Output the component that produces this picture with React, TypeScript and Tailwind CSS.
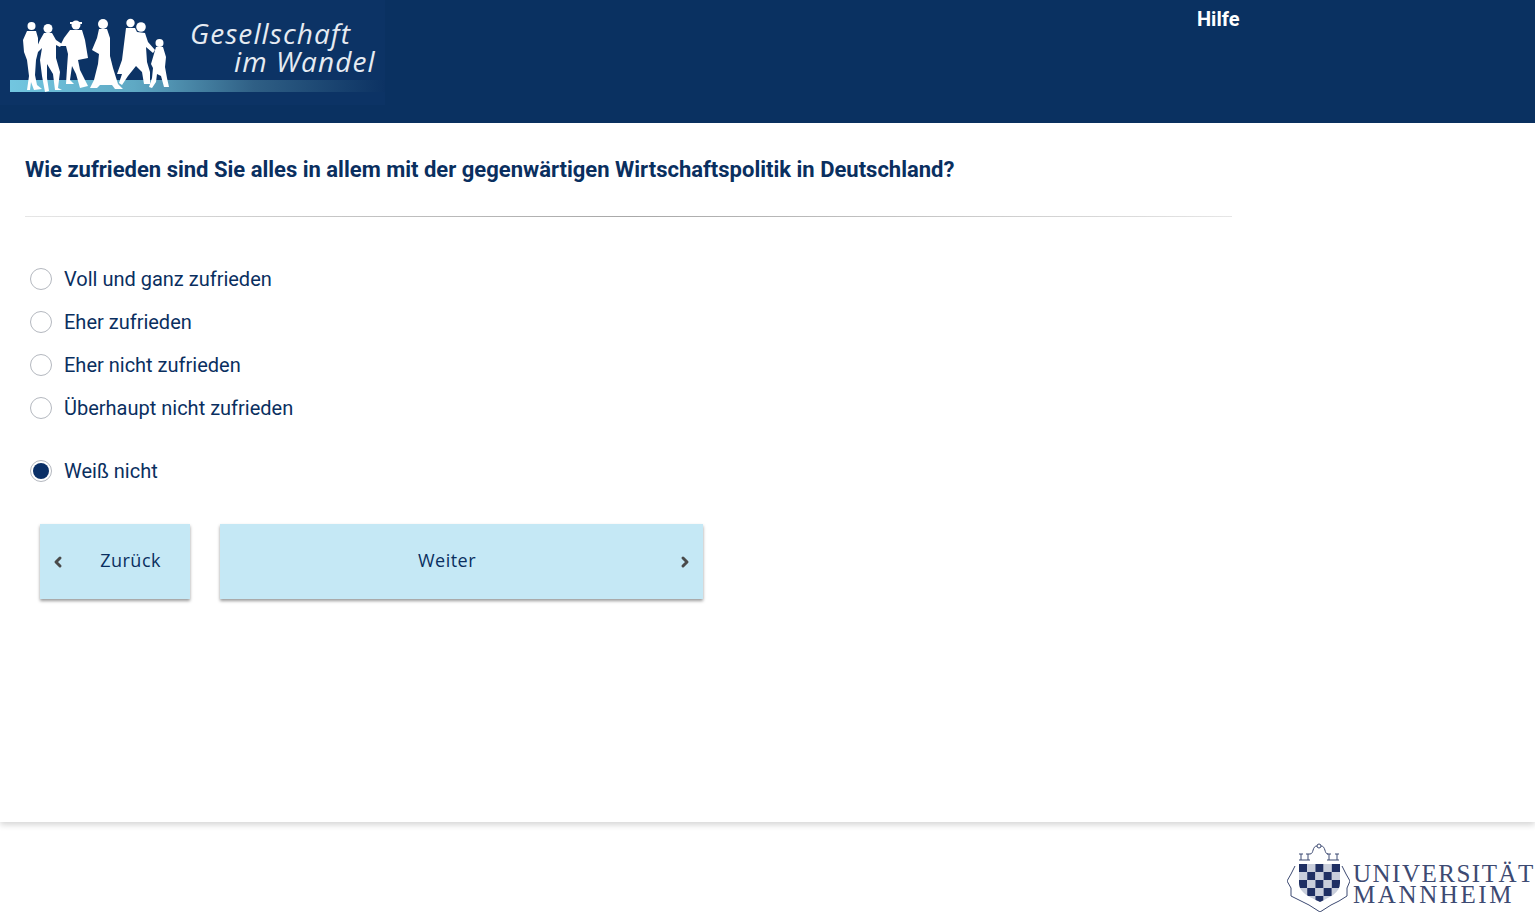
import { ChevronLeft, ChevronRight } from 'lucide-react';

const options = [
  { label: 'Voll und ganz zufrieden', checked: false },
  { label: 'Eher zufrieden', checked: false },
  { label: 'Eher nicht zufrieden', checked: false },
  { label: 'Überhaupt nicht zufrieden', checked: false },
];

function Radio({ label, checked }: { label: string; checked: boolean }) {
  return (
    <label className="flex h-[43px] items-center pl-[30px]">
      <span className="flex h-[22px] w-[22px] items-center justify-center rounded-full border border-[#b4b8bf] bg-white">
        {checked && <span className="h-4 w-4 rounded-full bg-[#0a2f66]" />}
      </span>
      <span className="ml-3 text-[20px] text-[#0a2f5f]">{label}</span>
    </label>
  );
}

function People() {
  return (
    <svg viewBox="0 0 385 105" className="h-[105px] w-[385px]" fill="#fff">
      <defs>
        <linearGradient id="band" x1="0" x2="1" y1="0" y2="0">
          <stop offset="0" stopColor="#72c6e0" />
          <stop offset="0.33" stopColor="#5fa9c4" />
          <stop offset="0.65" stopColor="#2f5f85" />
          <stop offset="1" stopColor="#0c3263" />
        </linearGradient>
      </defs>
      <rect x="0" y="0" width="385" height="105" fill="#0c3365" />
      <rect x="10" y="80" width="375" height="12" fill="url(#band)" />
      {/* man far left */}
      <circle cx="31.500" cy="26" r="4" />
      <path d="M27 31L36 31L38 38L38 52L36 60L35 75L37 85L42 89L34 90L31 82L30 90L27 90L29 76L27 60L24 52L23 40Z" />
      {/* woman */}
      <circle cx="48" cy="28.500" r="4.500" />
      <path d="M44 33L52 33L56 40L62 44L60 47L56 45L56 58L60 72L58 88L62 90L55 90L53 74L47 64L47 78L49 91L45 92L42 76L40 60L42 48L38 52L36 49L40 40Z" />
      {/* man with coat */}
      <circle cx="76" cy="25" r="4.500" />
      <path d="M70 22h12v2h-12z" />
      <path d="M70 30L82 30L85 40L88 58L78 60L80 70L88 86L80 88L76 74L72 66L70 80L74 84L66 84L67 68L68 54L66 46L60 46L64 38Z" />
      {/* woman in dress */}
      <circle cx="103" cy="24" r="5" />
      <path d="M99 29L107 29L110 38L110 56L113 68L118 84L123 89L115 89L112 85L100 85L97 88L90 88L94 80L98 64L99 54L92 50L97 38Z" />
      {/* couple */}
      <circle cx="130.500" cy="23" r="4.200" />
      <circle cx="141" cy="27" r="4.800" />
      <path d="M126 28L135 28L137 32L145 33L148 42L155 50L153 53L146 47L147 62L150 72L150 84L144 84L142 72L136 66L128 76L122 85L119 83L122 74L117 74L122 60L124 44Z" />
      {/* child */}
      <circle cx="159.500" cy="43" r="4" />
      <path d="M156 47L163 47L166 57L165 67L167 78L169 87L164 87L161 76L157 74L156 82L152 88L149 87L152 78L153 68L151 64Z" />
      <text
        x="190"
        y="44"
        fill="#e6ebf2"
        fontSize="28"
        fontStyle="italic"
        letterSpacing="1.100"
        fontFamily='"Open Sans", sans-serif'
      >
        Gesellschaft
      </text>
      <text
        x="234"
        y="72"
        fill="#e6ebf2"
        fontSize="28"
        fontStyle="italic"
        letterSpacing="1.100"
        fontFamily='"Open Sans", sans-serif'
      >
        im Wandel
      </text>
    </svg>
  );
}

function Crest() {
  const cells = Array.from({ length: 25 }, (_, i) => ({ c: i % 5, r: Math.floor(i / 5) }));
  return (
    <svg viewBox="0 0 63 69" className="h-[69px] w-[63px] shrink-0" fill="none" stroke="#3d4a72" strokeWidth="1">
      <defs>
        <clipPath id="shield">
          <path d="M12 21H53V40C53 50 43 54 33 59C23 54 12 50 12 40Z" />
        </clipPath>
      </defs>
      {/* crown and towers */}
      <path d="M12 17H23M14 17V11M21 17V11M12 11H16M19 11H23M40 17H52M42 17V11M50 17V11M40 11H44M48 11H52" />
      <path d="M23 11C27 11 25 3 30 3M34 3C39 3 37 11 41 11" />
      <circle cx="32" cy="3" r="2" />
      {/* mantle */}
      <path d="M8 23L4 31L0 38L4 45L4 53L14 58L22 62L33 69L44 62L52 58L60 53L60 45L63 38L59 31L55 23" />
      <g clipPath="url(#shield)" stroke="none">
        {cells.map(({ c, r }) => (
          <rect
            key={`${c}-${r}`}
            x={12 + c * 8.200}
            y={21 + r * 8}
            width="8.200"
            height="8"
            fill={(c + r) % 2 === 0 ? '#1f2f63' : '#c9cedb'}
          />
        ))}
      </g>
    </svg>
  );
}

export default function App() {
  return (
    <div className="flex h-[918px] flex-col overflow-hidden bg-white font-['Roboto',sans-serif]">
      <header className="flex h-[123px] shrink-0 items-start bg-[#0a3161]">
        <People />
        <a className="ml-[812px] mt-[4px] text-[20px] font-bold text-white">Hilfe</a>
      </header>

      <main className="relative z-10 flex-1 shadow-[0_3px_6px_rgba(0,0,0,0.16)]">
        <div className="w-[1232px] pl-[25px]">
          <h1 className="pt-[33px] text-[22px] leading-[28px] font-bold text-[#0a2f5f]">
            Wie zufrieden sind Sie alles in allem mit der gegenwärtigen Wirtschaftspolitik in Deutschland?
          </h1>
          <div className="mt-[32px] h-px bg-gradient-to-r from-[#e6e6e6] via-[#a8a8a8] to-[#e6e6e6]" />
        </div>

        <div className="mt-[40px] flex flex-col">
          {options.map((o) => (
            <Radio key={o.label} label={o.label} checked={o.checked} />
          ))}
          <div className="mt-5">
            <Radio label="Weiß nicht" checked />
          </div>
        </div>

        <div className="ml-10 mt-[32px] flex gap-[30px] font-['Open_Sans',sans-serif] text-[18px] tracking-[0.5px] text-[#0a2f5f]">
          <button className="relative flex h-[75px] w-[150px] items-center justify-end bg-[#c5e8f5] pb-[2px] pr-[29px] shadow-[0_2px_3px_rgba(0,0,0,0.4)]">
            <ChevronLeft size={16} strokeWidth={4.500} className="absolute left-[10px] top-[30px] text-[#4a4a4a]" />
            Zurück
          </button>
          <button className="relative flex h-[75px] w-[483px] items-center justify-center bg-[#c5e8f5] pb-[2px] pr-[29px] shadow-[0_2px_3px_rgba(0,0,0,0.4)]">
            Weiter
            <ChevronRight size={16} strokeWidth={4.500} className="absolute right-[10px] top-[30px] text-[#4a4a4a]" />
          </button>
        </div>
      </main>

      <footer className="flex h-[96px] shrink-0 items-start justify-end overflow-hidden pt-[21px]">
        <Crest />
        <div className="ml-[3px] mt-[20px] w-[182px] font-['Liberation_Serif',serif] text-[25px] leading-[21px] whitespace-nowrap text-[#3d4a72]">
          <div className="tracking-[1.5px]">UNIVERSITÄT</div>
          <div className="tracking-[2.6px]">MANNHEIM</div>
        </div>
      </footer>
    </div>
  );
}
